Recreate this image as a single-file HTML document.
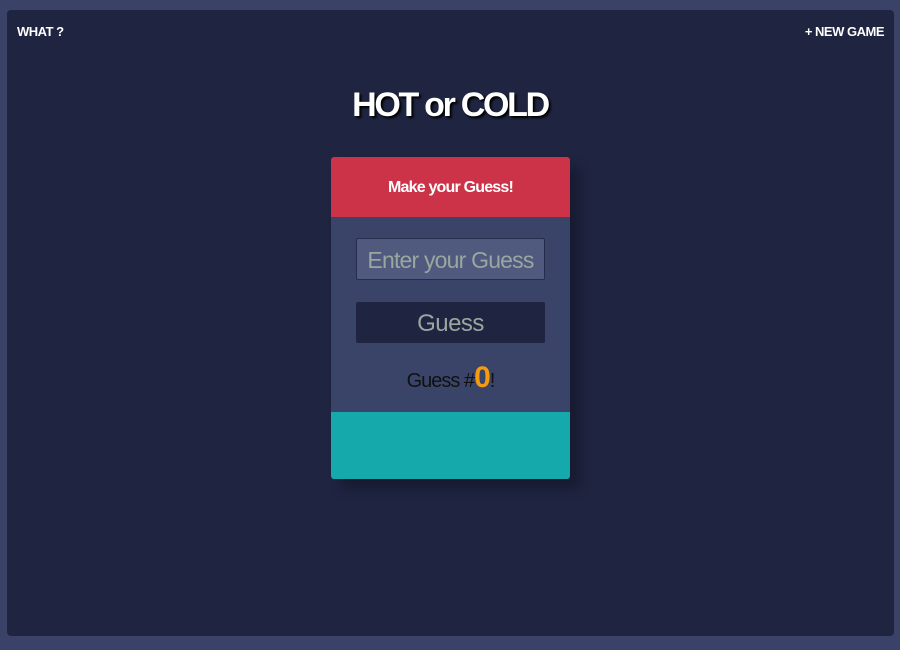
<!DOCTYPE html>
<html><head><style>
html,body{margin:0;padding:0;width:900px;height:650px;background:#3a4268;overflow:hidden;font-family:"Liberation Sans",sans-serif;}
.inner{position:absolute;left:7px;top:10px;width:887px;height:626px;background:#1f2441;border-radius:4px;}
.nav{position:absolute;top:24px;color:#fff;font-weight:bold;font-size:13px;letter-spacing:-0.5px;}
h1{position:absolute;left:0;width:900px;top:86px;margin:0;text-align:center;color:#fff;font-size:34px;font-weight:bold;letter-spacing:-2.3px;text-shadow:2px 2px 2px #000;}
.card{position:absolute;left:331px;top:157px;width:239px;height:322px;border-radius:3px;overflow:hidden;box-shadow:10px 10px 12px rgba(0,0,0,0.25);}
.hd{height:60px;background:#cc3349;color:#fff;text-align:center;line-height:62px;font-size:16px;font-weight:bold;letter-spacing:-0.8px;}
.md{position:relative;height:195px;background:#3a4468;}
.inp{position:absolute;left:25px;top:21px;width:187px;height:40px;background:#4f5a7e;border:1px solid #262c4b;border-radius:2px;color:#9aa79f;font-size:23px;text-align:center;line-height:42px;white-space:nowrap;letter-spacing:-0.8px;overflow:hidden;}
.btn{position:absolute;left:25px;top:85px;width:189px;height:41px;background:#1f2441;border-radius:2px;color:#9aa79f;font-size:24px;text-align:center;line-height:44px;letter-spacing:-0.5px;}
.cnt{position:absolute;left:0;width:239px;top:144px;text-align:center;font-size:20px;color:#111;letter-spacing:-1px;}
.cnt b{color:#f59b0f;font-size:30px;font-weight:bold;}
.ft{height:67px;background:#15a9ab;}
</style></head><body>
<div class="inner"></div>
<div class="nav" style="left:17px">WHAT ?</div>
<div class="nav" style="right:16px">+ NEW GAME</div>
<h1>HOT or COLD</h1>
<div class="card">
<div class="hd">Make your Guess!</div>
<div class="md">
<div class="inp">Enter your Guess</div>
<div class="btn">Guess</div>
<div class="cnt">Guess #<b>0</b>!</div>
</div>
<div class="ft"></div>
</div>
</body></html>
